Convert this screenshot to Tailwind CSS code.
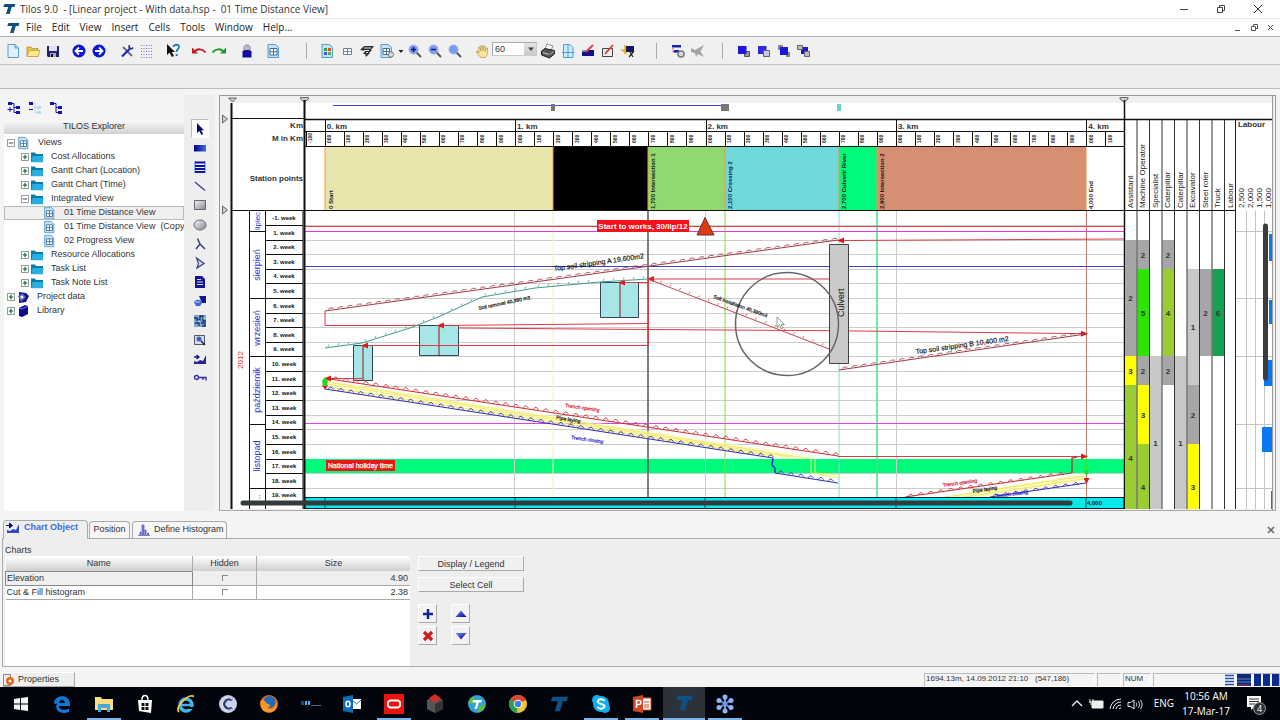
<!DOCTYPE html>
<html lang="en">
<head>
  <meta charset="UTF-8">
  <meta name="viewport" content="width=device-width, initial-scale=1.0">
  <title>Tilos 9.0 - Linear project</title>
  <script src="https://cdn.jsdelivr.net/npm/@tailwindcss/browser@4"></script>
</head>
<body class="h-screen overflow-hidden flex flex-col bg-[#f4f4f4] text-[#333] font-['Liberation_Sans',sans-serif] text-[9px]">

  <!-- Shared icons -->
  <svg class="absolute w-0 h-0">
    <defs>
      <linearGradient id="g-blue" x1="0" y1="0" x2="1" y2="1"><stop offset="0" stop-color="#7090ff"/><stop offset="1" stop-color="#000090"/></linearGradient>
      <linearGradient id="g-navy" x1="0" y1="0" x2="1" y2="0"><stop offset="0" stop-color="#000080"/><stop offset="1" stop-color="#3a70e8"/></linearGradient>
      <linearGradient id="g-grey" x1="0" y1="0" x2="1" y2="1"><stop offset="0" stop-color="#f4f4ff"/><stop offset="1" stop-color="#888"/></linearGradient>
      <symbol id="tilos" viewBox="0 0 14 12"><path d="M2.5 1h10.8l-.8 3H9.8L7.6 11H4l2.2-7H1.2z" fill="#0e4f86"/></symbol>
      <symbol id="doc" viewBox="0 0 16 16"><path d="M3 1.5h7l3.5 3.5v9.500H3z" fill="#dff1fc" stroke="#5e9cc8"/><path d="M10 1.5v3.5h3.5" fill="#9fd0ee" stroke="#5e9cc8"/></symbol>
      <symbol id="sheet" viewBox="0 0 16 16"><path d="M3 1.5h7.5l3 3v10H3z" fill="#c4e2f5" stroke="#5a9bca"/><path d="M5 5.5h7v6.5H5zM8.500 5.5V12M5 8.7h7" fill="#fff" stroke="#3f6f9c"/></symbol>
      <symbol id="folder" viewBox="0 0 14 12"><path d="M1 1.5h4l1 1.5h7v8H1z" fill="#0a7cab"/><path d="M2.5 5H13.500l-.7 6.2H1.5z" fill="#27aee0"/></symbol>
      <symbol id="plus-box" viewBox="0 0 9 9"><path d="M.5.5h8v8h-8z" fill="#fff" stroke="#7c8c7c"/><path d="M2 4.5h5M4.5 2v5" stroke="#063" stroke-width="1.3"/></symbol>
      <symbol id="minus-box" viewBox="0 0 9 9"><path d="M.5.5h8v8h-8z" fill="#fff" stroke="#888"/><path d="M2 4.5h5" stroke="#333"/></symbol>
      <symbol id="lens" viewBox="0 0 16 16"><path d="M9.5 9.5l4.5 4.5" stroke="#555" stroke-width="2"/><circle cx="6.5" cy="6.5" r="4.5" fill="#7b9bf0" stroke="#9ab0e8"/></symbol>
    </defs>
  </svg>

  <!-- Title bar -->
  <header class="h-[19px] shrink-0 flex items-center bg-white pl-0.5 border-b border-[#e8e8e8] font-['Open_Sans','Noto_Sans',sans-serif] text-[10px]">
    <svg class="w-[14px] h-3"><use href="#tilos"/></svg>
    <h1 class="ml-1 text-[#333] whitespace-pre">Tilos 9.0  - [Linear project - With data.hsp -  01 Time Distance View]</h1>
    <div class="ml-auto flex">
      <button class="w-[37px] flex justify-center" aria-label="Minimize"><svg class="w-2.5 h-2.5" viewBox="0 0 10 10"><path d="M1 5.5h8" stroke="#444"/></svg></button>
      <button class="w-[37px] flex justify-center" aria-label="Restore"><svg class="w-2.5 h-2.5" viewBox="0 0 10 10" fill="none" stroke="#444"><path d="M1.5 3.5h5v5h-5zM3.5 3V1.5h5v5H7"/></svg></button>
      <button class="w-[37px] mr-1 flex justify-center" aria-label="Close"><svg class="w-2.5 h-2.5" viewBox="0 0 10 10"><path d="M1 1l8 8M9 1L1 9" stroke="#333"/></svg></button>
    </div>
  </header>

  <!-- Menu -->
  <nav class="h-[18px] shrink-0 flex items-center bg-white pl-[6px] border-b border-[#b0b0b0] font-['Open_Sans','Noto_Sans',sans-serif] text-[10px] text-[#222]">
    <svg class="w-[14px] h-3 mr-1.5"><use href="#tilos"/></svg>
    <div class="flex gap-2.5">
      <button>File</button><button>Edit</button><button>View</button><button>Insert</button><button>Cells</button><button>Tools</button><button>Window</button><button>Help...</button>
    </div>
    <svg class="ml-auto mr-1 w-[42px] h-2.5" viewBox="0 0 42 10" fill="none" stroke="#555"><path d="M1 7.5h5M17.5 3.5h4v4h-4zM19.5 3V1.5h4v4H22M34 2l5 5M39 2l-5 5"/></svg>
  </nav>

  <!-- Toolbar -->
  <div class="h-[28px] shrink-0 flex items-center bg-[#f0f0f0] pl-[3px] border-b border-[#c4c4c4]">
    <button class="w-5 flex justify-center" aria-label="New"><svg class="w-4 h-4"><use href="#doc"/></svg></button>
    <button class="w-5 flex justify-center" aria-label="Open"><svg class="w-4 h-4" viewBox="0 0 16 16"><path d="M2 4h4l1.5 1.5H13V13H2z" fill="#e8c84c" stroke="#a88420" stroke-width=".7"/><path d="M4 7.5h11L13 13.5H2z" fill="#fbe98e" stroke="#b8942c" stroke-width=".7"/></svg></button>
    <button class="w-5 flex justify-center" aria-label="Save"><svg class="w-4 h-4" viewBox="0 0 16 16"><path d="M2 3h12v11H3l-1-1z" fill="#22226a"/><path d="M4 3h8v5H4z" fill="#e0e0f4"/><path d="M5 10h6v4H5z" fill="#aab"/><path d="M6 11h2v3H6z" fill="#114"/></svg></button>
    <button class="ml-1.5 w-5 flex justify-center" aria-label="Back"><svg class="w-4 h-4" viewBox="0 0 16 16"><circle cx="8" cy="8" r="6.5" fill="#0a14dc"/><path d="M12 8H5M8 4.5L4.5 8 8 11.5" stroke="#fff" stroke-width="1.8" fill="none"/></svg></button>
    <button class="w-5 flex justify-center" aria-label="Forward"><svg class="w-4 h-4" viewBox="0 0 16 16"><circle cx="8" cy="8" r="6.5" fill="#0a14dc"/><path d="M4 8h7M8 4.5l3.5 3.5L8 11.5" stroke="#fff" stroke-width="1.8" fill="none"/></svg></button>
    <button class="ml-2 w-5 flex justify-center" aria-label="Settings"><svg class="w-4 h-4" viewBox="0 0 16 16"><path d="M4 4l9 9" stroke="#668" stroke-width="1.8"/><path d="M10.500 6L3 13.500" stroke="#1c28b8" stroke-width="2.2"/><path d="M14 4.5c-1.500 2.500-5 1-3.500-2.500" stroke="#222a80" stroke-width="1.5" fill="none"/></svg></button>
    <button class="w-5 flex justify-center" aria-label="Grid"><svg class="w-4 h-4" viewBox="0 0 16 16"><path d="M2 2.5h12M2 5.5h12M2 8.5h12M2 11.5h12M2 14.5h12" stroke="#7070e0" stroke-dasharray="1 1.5"/></svg></button>
    <button class="ml-1.5 w-5 flex justify-center" aria-label="Context help"><svg class="w-4 h-4" viewBox="0 0 16 16"><path d="M2 1v11l2.5-2.5L7 14l2-1-2.3-4H10z" fill="#111"/><path d="M8.500 4c0-3 5.500-3 5.500 0 0 2.500-2.500 2-2.500 5" stroke="#2080b8" stroke-width="1.8" fill="none"/><path d="M10.700 11h2v2h-2z" fill="#2080b8"/></svg></button>
    <button class="ml-1.5 w-5 flex justify-center" aria-label="Undo"><svg class="w-4 h-4" viewBox="0 0 16 16"><path d="M3.500 8.500c3-3 8-3 11 1" stroke="#c41c1c" stroke-width="2" fill="none"/><path d="M1 4.500v6h6z" fill="#c41c1c"/></svg></button>
    <button class="w-5 flex justify-center" aria-label="Redo"><svg class="w-4 h-4" viewBox="0 0 16 16"><path d="M12.500 8.500c-3-3-8-3-11 1" stroke="#1d9a2c" stroke-width="2" fill="none"/><path d="M15 4.500v6H9z" fill="#1d9a2c"/></svg></button>
    <button class="ml-2 w-5 flex justify-center" aria-label="User"><svg class="w-4 h-4" viewBox="0 0 16 16"><path d="M5 8V4.500c0-3.500 6-3.500 6 0V8z" fill="#b8b8cc" stroke="#889"/><path d="M3.500 8c2-1.500 7-1.500 9 0v6.500h-9z" fill="#1010a0"/></svg></button>
    <button class="ml-1.5 w-5 flex justify-center" aria-label="Sheet"><svg class="w-4 h-4"><use href="#sheet"/></svg></button>
    <span class="ml-[23px] w-px h-4 bg-[#aaa]"></span>
    <button class="ml-2.5 w-5 flex justify-center" aria-label="Colours"><svg class="w-4 h-4" viewBox="0 0 16 16"><path d="M3 1.5h7.5l3 3v10H3z" fill="#c4e2f5" stroke="#5a9bca"/><path d="M5 5h3v3H5z" fill="#3a9c3a"/><path d="M9 5h3v3H9z" fill="#e05030"/><path d="M5 9h3v3H5z" fill="#4060d0"/><path d="M9 9h3v3H9z" fill="#5aa848"/></svg></button>
    <button class="w-5 flex justify-center" aria-label="Cells"><svg class="w-4 h-4" viewBox="0 0 16 16" fill="#fff" stroke="#777fa4"><path d="M4.5 5.5h8v6h-8zM8.500 5.5v6M4.5 8.5h8"/></svg></button>
    <button class="w-5 flex justify-center" aria-label="Filter"><svg class="w-4 h-4" viewBox="0 0 16 16"><path d="M1 7l4-4h10l-3 4h1l-3 3h1l-4 4-1-3H4l2-3z" fill="#333"/><path d="M5 5h7M5 7.500h5M7 9.500h2" stroke="#ddd"/></svg></button>
    <button class="w-5 flex justify-center" aria-label="Sheet options"><svg class="w-4 h-4" viewBox="0 0 16 16"><path d="M2 1.5h7.5l3 3v10H2z" fill="#c4e2f5" stroke="#5a9bca"/><path d="M4 5.5h6.5v6H4zM7.5 5.5v6M4 8.5h6.5" fill="#fff" stroke="#3f6f9c"/><circle cx="12" cy="11.5" r="2.6" fill="#ddd" stroke="#777"/></svg></button>
    <svg class="w-2 h-2" viewBox="0 0 8 8"><path d="M1.5 3h5L4 6z" fill="#222"/></svg>
    <button class="w-5 flex justify-center" aria-label="Zoom in"><svg class="w-4 h-4" viewBox="0 0 16 16"><use href="#lens"/><path d="M4 6.5h5M6.5 4v5" stroke="#111a70" stroke-width="1.5"/></svg></button>
    <button class="w-5 flex justify-center" aria-label="Zoom out"><svg class="w-4 h-4" viewBox="0 0 16 16"><use href="#lens"/><path d="M4 6.5h5" stroke="#111a70" stroke-width="1.5"/></svg></button>
    <button class="w-5 flex justify-center" aria-label="Zoom fit"><svg class="w-4 h-4"><use href="#lens"/></svg></button>
    <button class="ml-[7px] w-5 flex justify-center" aria-label="Pan"><svg class="w-4 h-4" viewBox="0 0 16 16"><path d="M2 8l2 .5L5 10 4.500 4H6l.7 4L7 2.500h1.500L9 8l.8-5h1.400v5.500l1-3.500h1.300c.3 5-.5 9-2.500 9.500H7C5 13.500 3.500 10.500 2 8z" fill="#fbe3a0" stroke="#b8903c" stroke-width=".7"/></svg></button>
    <select aria-label="Zoom" class="mb-1 w-[45px] h-[14px] bg-white border border-[#aaa] border-r-[#ccc] border-b-[#ccc] appearance-none text-[9px] pl-0.5 rounded-none bg-[linear-gradient(#e4e4e4,#c8c8c8)] bg-[length:12px_12px] bg-right bg-no-repeat"><option>60</option></select>
    <svg class="-ml-3 mb-1 w-3 h-3 pointer-events-none" viewBox="0 0 12 12"><path d="M3 4.5h6L6 8z" fill="#444"/></svg>
    <button class="ml-px w-5 flex justify-center" aria-label="Print"><svg class="w-4 h-4" viewBox="0 0 16 16"><path d="M5 6l2-5 6 2-2 4z" fill="#fff" stroke="#666" stroke-width=".7"/><path d="M1.5 8L5 5.5l9.500 2V11l-5 4-8-3z" fill="#555" stroke="#222"/><path d="M3 9.500l6 2" stroke="#ccc"/><path d="M10 11l4-2.500" stroke="#aaa"/></svg></button>
    <button class="w-5 flex justify-center" aria-label="Page"><svg class="w-4 h-4" viewBox="0 0 16 16"><path d="M3.500 1.5H10l3 3v10H3.500z" fill="#cfeafa" stroke="#48a0d0"/><path d="M8 2v12M2 9.500h12.500" stroke="#48a0d0"/></svg></button>
    <button class="w-5 flex justify-center" aria-label="Format"><svg class="w-4 h-4" viewBox="0 0 16 16"><path d="M2 7h12v6H2z" fill="#10108c"/><path d="M2 7h5L5 9H2z" fill="#88a"/><path d="M6 9l7-7" stroke="#e04048" stroke-width="2"/></svg></button>
    <button class="w-5 flex justify-center" aria-label="Edit cell"><svg class="w-4 h-4" viewBox="0 0 16 16"><path d="M2.5 5.5h10v8h-10z" fill="#eee" stroke="#444"/><path d="M5 11l8-9" stroke="#d83840" stroke-width="1.8"/></svg></button>
    <button class="w-5 flex justify-center" aria-label="Wizard"><svg class="w-4 h-4" viewBox="0 0 16 16"><path d="M6 3h8v6H6z" fill="#181860"/><path d="M1 7h5M5 2v9M3 8l4 2" stroke="#dcb020" stroke-width="1.5"/><path d="M9 14l5-6M10 9l3 5" stroke="#222" stroke-width="1.2"/></svg></button>
    <span class="ml-[18px] w-px h-4 bg-[#aaa]"></span>
    <button class="ml-[11px] w-5 flex justify-center" aria-label="Task settings"><svg class="w-4 h-4" viewBox="0 0 16 16"><path d="M2 2h9v2.500H2z" fill="#1424b4"/><path d="M3 5v4M3 9h4" stroke="#d84040" stroke-dasharray="1.5 1"/><path d="M4 7h5v2.500H4z" fill="#1424b4"/><circle cx="11" cy="11" r="3" fill="#ddd" stroke="#777" stroke-width="1.5"/></svg></button>
    <button class="w-5 flex justify-center" aria-label="Announce"><svg class="w-4 h-4" viewBox="0 0 16 16"><path d="M1 5l4 2 9-5-3.500 6.500L14 14l-6-3-2 3-1-4-4-1z" fill="#a4a4a4"/></svg></button>
    <span class="ml-[14px] w-px h-4 bg-[#aaa]"></span>
    <button class="ml-[11px] w-5 flex justify-center" aria-label="To front"><svg class="w-4 h-4" viewBox="0 0 16 16"><path d="M8.500 8.500h5v5h-5z" fill="#999" stroke="#555"/><path d="M2 3h8.500v8H2z" fill="#1818e0"/></svg></button>
    <button class="w-5 flex justify-center" aria-label="To back"><svg class="w-4 h-4" viewBox="0 0 16 16"><path d="M2 3h8.500v8H2z" fill="#2a2ae0"/><path d="M7.500 7.500h6v6h-6z" fill="#c8c8dc" stroke="#666"/></svg></button>
    <button class="w-5 flex justify-center" aria-label="Forward one"><svg class="w-4 h-4" viewBox="0 0 16 16"><path d="M2 2h5v5H2zM10 9h4v5h-4z" fill="#888"/><path d="M4 4h8v8H4z" fill="#1818d8"/></svg></button>
    <button class="w-5 flex justify-center" aria-label="Back one"><svg class="w-4 h-4" viewBox="0 0 16 16"><path d="M5 4h7v7H5z" fill="#1818d8"/><path d="M1.500 2.500h5v4h-5zM8.500 8.500h5v5h-5z" fill="#bbb" stroke="#666"/></svg></button>
  </div>
  <div class="h-6 shrink-0 bg-[#eee] border-b border-[#bbb]"></div>

  <!-- Work area -->
  <main class="flex-1 min-h-0 flex pt-1.5 pb-0.5 pr-1 bg-[#f4f4f4]">
    <aside class="w-[184px] shrink-0 pl-1 flex flex-col">
      <div class="h-[25px] flex items-center pl-[3px] gap-[7px] bg-[#f4f4f4]">
        <button aria-label="Expand all"><svg class="w-3.5 h-3.5" viewBox="0 0 14 14" fill="#1010b4"><path d="M1 1h4v3H1zM9 5h4v3H9zM9 10h4v3H9z"/><path d="M5 2.500h2v9h2M7 6.500h2M.5 8.500h5M3 6v5" stroke="#1010b4" fill="none"/></svg></button>
        <button aria-label="Collapse all"><svg class="w-3.5 h-3.5" viewBox="0 0 14 14" fill="#b8dcf0"><path d="M1 1h4v3H1z" fill="#1010b4"/><path d="M9 5h4v3H9zM9 10h4v3H9z"/><path d="M5 2.500h2v9h2M7 6.500h2" stroke="#b8dcf0" fill="none"/><path d="M1 8.500h4" stroke="#1010b4"/></svg></button>
        <button aria-label="Show tree"><svg class="w-3.5 h-3.5" viewBox="0 0 14 14" fill="#1010b4"><path d="M1 1h4v3H1zM9 5h4v3H9zM9 10h4v3H9z"/><path d="M5 2.500h2v9h2M7 6.500h2" stroke="#1010b4" fill="none"/></svg></button>
      </div>
      <h2 class="h-[14px] flex items-center justify-center bg-linear-to-b from-[#fafafa] to-[#d2d2d2] text-[9px]">TILOS Explorer</h2>
      <ul class="flex-1 bg-white pt-0.5 text-[9px]">
        <li class="h-[14px] flex items-center pl-[3px]"><svg class="w-2 h-2"><use href="#minus-box"/></svg><svg class="w-3.5 h-3.5 ml-px"><use href="#sheet"/></svg><span class="ml-2">Views</span></li>
        <li class="h-[14px] flex items-center pl-[17px]"><svg class="w-2 h-2"><use href="#plus-box"/></svg><svg class="w-3.5 h-3 ml-px"><use href="#folder"/></svg><span class="ml-[7px]">Cost Allocations</span></li>
        <li class="h-[14px] flex items-center pl-[17px]"><svg class="w-2 h-2"><use href="#plus-box"/></svg><svg class="w-3.5 h-3 ml-px"><use href="#folder"/></svg><span class="ml-[7px]">Gantt Chart (Location)</span></li>
        <li class="h-[14px] flex items-center pl-[17px]"><svg class="w-2 h-2"><use href="#plus-box"/></svg><svg class="w-3.5 h-3 ml-px"><use href="#folder"/></svg><span class="ml-[7px]">Gantt Chart (Time)</span></li>
        <li class="h-[14px] flex items-center pl-[17px]"><svg class="w-2 h-2"><use href="#minus-box"/></svg><svg class="w-3.5 h-3 ml-px"><use href="#folder"/></svg><span class="ml-[7px]">Integrated View</span></li>
        <li class="h-[14px] flex items-center pl-[38px] bg-[#efefef] outline outline-[#bbb] -outline-offset-1"><svg class="w-3.5 h-3.5"><use href="#sheet"/></svg><span class="ml-2">01 Time Distance View</span></li>
        <li class="h-[14px] flex items-center pl-[38px]"><svg class="w-3.5 h-3.5 shrink-0"><use href="#sheet"/></svg><span class="ml-2 whitespace-pre overflow-hidden">01 Time Distance View  (Copy</span></li>
        <li class="h-[14px] flex items-center pl-[38px]"><svg class="w-3.5 h-3.5"><use href="#sheet"/></svg><span class="ml-2">02 Progress View</span></li>
        <li class="h-[14px] flex items-center pl-[17px]"><svg class="w-2 h-2"><use href="#plus-box"/></svg><svg class="w-3.5 h-3 ml-px"><use href="#folder"/></svg><span class="ml-[7px]">Resource Allocations</span></li>
        <li class="h-[14px] flex items-center pl-[17px]"><svg class="w-2 h-2"><use href="#plus-box"/></svg><svg class="w-3.5 h-3 ml-px"><use href="#folder"/></svg><span class="ml-[7px]">Task List</span></li>
        <li class="h-[14px] flex items-center pl-[17px]"><svg class="w-2 h-2"><use href="#plus-box"/></svg><svg class="w-3.5 h-3 ml-px"><use href="#folder"/></svg><span class="ml-[7px]">Task Note List</span></li>
        <li class="h-[14px] flex items-center pl-[3px]"><svg class="w-2 h-2"><use href="#plus-box"/></svg><svg class="w-3.5 h-3.5 ml-px" viewBox="0 0 14 14"><path d="M3 2l7 1 3 3-3 6-7 1z" fill="#14147c"/><path d="M2 6l4-3 4 4-5 5z" fill="#4c60d8"/><circle cx="6" cy="7" r="1.5" fill="#fff"/></svg><span class="ml-[7px]">Project data</span></li>
        <li class="h-[14px] flex items-center pl-[3px]"><svg class="w-2 h-2"><use href="#plus-box"/></svg><svg class="w-3.5 h-3.5 ml-px" viewBox="0 0 14 14"><path d="M3 4l6-3 3 1v8l-6 3-3-1z" fill="#0c0c90"/><path d="M3 4l3 1 6-3" stroke="#6a7ae8" fill="none"/></svg><span class="ml-[7px]">Library</span></li>
      </ul>
    </aside>

    <div class="w-[31px] shrink-0 pt-6 bg-[#eee]">
      <div class="h-[269px] flex flex-col items-center justify-between">
        <button class="w-[18px] h-[19px] flex items-center justify-center bg-white border border-[#bbb] border-r-white border-b-white" aria-label="Select"><svg class="w-3.5 h-3.5" viewBox="0 0 14 14"><path d="M4 1v10l2.300-2L8.500 13l1.700-1-2-3.700H11z" fill="#0a0a70"/></svg></button>
        <button class="w-[18px] h-[19px] flex items-center justify-center" aria-label="Bar"><svg class="w-3.5 h-3.5" viewBox="0 0 14 14"><path d="M1 4h12v6.500H1z" fill="url(#g-navy)"/></svg></button>
        <button class="w-[18px] h-[19px] flex items-center justify-center" aria-label="Bars"><svg class="w-3.5 h-3.5" viewBox="0 0 14 14"><path d="M1 1h2v12H1zM11 1h2v12h-2z" fill="#8fb4ee"/><path d="M2 2.500h10M2 6h10M2 9h10M2 12h10" stroke="#1212a0" stroke-width="1.8"/></svg></button>
        <button class="w-[18px] h-[19px] flex items-center justify-center" aria-label="Line"><svg class="w-3.5 h-3.5" viewBox="0 0 14 14"><path d="M2 3l10 8.500" stroke="#3434b0" stroke-width="1.2"/></svg></button>
        <button class="w-[18px] h-[19px] flex items-center justify-center" aria-label="Rectangle"><svg class="w-3.5 h-3.5" viewBox="0 0 14 14"><path d="M1.500 2.500h11v9h-11z" fill="url(#g-grey)" stroke="#667"/></svg></button>
        <button class="w-[18px] h-[19px] flex items-center justify-center" aria-label="Ellipse"><svg class="w-3.5 h-3.5" viewBox="0 0 14 14"><ellipse cx="7" cy="7" rx="6" ry="5" fill="url(#g-grey)" stroke="#667"/></svg></button>
        <button class="w-[18px] h-[19px] flex items-center justify-center" aria-label="Polyline"><svg class="w-3.5 h-3.5" viewBox="0 0 14 14"><path d="M3 12l4-5 5 5M7 7L4.500 1.500" stroke="#333c78" stroke-width="1.5" fill="none"/></svg></button>
        <button class="w-[18px] h-[19px] flex items-center justify-center" aria-label="Polygon"><svg class="w-3.5 h-3.5" viewBox="0 0 14 14"><path d="M3.500 2l7.500 5.500-7 4.500 1.500-4.500z" fill="#d8dcec" stroke="#333c78" stroke-width="1.2"/></svg></button>
        <button class="w-[18px] h-[19px] flex items-center justify-center" aria-label="Note"><svg class="w-3.5 h-3.5" viewBox="0 0 14 14"><path d="M2 1h7l3 3v9H2z" fill="#14148c"/><path d="M4 4.500h4M4 7h6M4 9.500h6" stroke="#cfd6ff"/></svg></button>
        <button class="w-[18px] h-[19px] flex items-center justify-center" aria-label="Shape"><svg class="w-3.5 h-3.5" viewBox="0 0 14 14"><path d="M6 2h7v7H9z" fill="#14148c"/><path d="M1 8c2-3 7-3 8 1l-2 3H3z" fill="#3f63d8"/><path d="M2 8h5" stroke="#cde"/></svg></button>
        <button class="w-[18px] h-[19px] flex items-center justify-center" aria-label="Map"><svg class="w-3.5 h-3.5" viewBox="0 0 14 14"><path d="M1 1h12v12H1z" fill="#7ca8cc"/><path d="M1 4h3v2h3V2h3v5h3M2 9h4v3M8 9h4v3H9" stroke="#16306c" stroke-width="1.3" fill="none"/><path d="M5 7h2M10 4h2" stroke="#d4eaf0"/></svg></button>
        <button class="w-[18px] h-[19px] flex items-center justify-center" aria-label="Picture"><svg class="w-3.5 h-3.5" viewBox="0 0 14 14"><path d="M1.500 2.500h10v9h-10z" fill="#cfdcf4" stroke="#556"/><circle cx="6" cy="6" r="2.5" fill="#4060b8"/><path d="M8 8l4 4" stroke="#222" stroke-width="1.5"/></svg></button>
        <button class="w-[18px] h-[19px] flex items-center justify-center" aria-label="Histogram"><svg class="w-3.5 h-3.5" viewBox="0 0 14 14"><path d="M1 12V9l3 1 3-2 3 1 3-6v9z" fill="#23239c"/><path d="M1 5h4M3.500 3L6 5 3.500 7" stroke="#111a80" stroke-width="1.3" fill="none"/></svg></button>
        <button class="w-[18px] h-[19px] flex items-center justify-center" aria-label="Key"><svg class="w-3.5 h-3.5" viewBox="0 0 14 14"><circle cx="3.500" cy="6.500" r="2" fill="none" stroke="#2a2aa8" stroke-width="1.3"/><path d="M5.500 6.500H13v3M10 6.500V9" stroke="#2a2aa8" stroke-width="1.3" fill="none"/></svg></button>
      </div>
    </div>

    <!-- Time distance chart -->
    <section class="ml-1 flex-1 min-w-0 border border-[#999] border-b-[#aaa] bg-[#f0f0f0]">
      <svg id="chart" class="block w-full h-full font-['Liberation_Sans',sans-serif]" viewBox="220 96 1055 414" preserveAspectRatio="xMinYMin meet">
        <path d="M232 103H1272V509H232z" fill="#fff"/>

        <!-- split handles -->
        <g fill="#ccc" stroke="#666"><path d="M228.500 98h8l-4 4zM300.500 97.500h8v1.500l-4 3-4-3zM1120 97.500h8v1.500l-4 3-4-3zM222.500 115v8l5-4zM222.500 206v8l5-4z"/></g>

        <!-- overview -->
        <path d="M333 105.500H724" stroke="#4444e0"/>
        <path d="M551 104h4v7h-4zM721 104h8v7h-8z" fill="#777"/>
        <path d="M837 104h4v7h-4z" fill="#66d4cc"/>

        <!-- station zones -->
        <g>
          <path d="M325 147h228v63H325z" fill="#e8e6ac"/>
          <path d="M553 147h95v63h-95z" fill="#000"/>
          <path d="M648 147h77v63h-77z" fill="#90d870"/>
          <path d="M725 147h114v63H725z" fill="#6fd8da"/>
          <path d="M839 147h38v63h-38z" fill="#00fa7c"/>
          <path d="M877 147h209v63H877z" fill="#d68f72"/>
          <path d="M325 147v63M553 147v63M648 147v63M725 147v63M839 147v63M877 147v63M1086 147v63" stroke="#f09838"/>
        </g>

        <g id="weeks"></g>

        <!-- holiday band -->
        <path d="M305 459h819v14H305z" fill="#00fa7c"/>

        <!-- station lines -->
        <path d="M514.500 210V497M705.500 210V497M896.500 210V497" stroke="#ccc"/>
        <path d="M553 210V497" stroke="#eef2c0"/>
        <path d="M648 210V497" stroke="#555" stroke-width="1.5"/>
        <path d="M725 210V497" stroke="#84d84c"/>
        <path d="M839 210V497" stroke="#7adfd0"/>
        <path d="M877 210V497" stroke="#40e090" stroke-width="1.5"/>
        <path d="M1086.500 210V497" stroke="#c87868"/>
        <path d="M305 226.500H1124" stroke="#f04040"/>
        <path d="M305 231.500H1124" stroke="#f030f0"/>
        <path d="M305 266.500H1124" stroke="#4040c0"/>
        <path d="M305 423.500H1124" stroke="#e040e8"/>

        <!-- cut boxes -->
        <g fill="#a6e6e6" stroke="#345">
          <path d="M600.500 282.500h38v35h-38zM419.500 325.500h39v30h-39zM353.500 345.500h19v35h-19z"/>
        </g>
        <path d="M620 282v35M439 325v30M363 345v35" stroke="#a04050" stroke-width="1.3"/>

        <!-- red connections -->
        <g fill="none" stroke="#dc3c44">
          <path d="M325 311V325.500H420M440 325.500L648 323.500M458 328L648 329.500L830 330.700L1086 333.700M366 345.500H648M330 378.500H363M648 279H829M622 282.500H648M648.500 279V346M841 240.500L1124 239M838 456.500H1082"/>
        </g>
        <g fill="#e01818">
          <path d="M324 378.500l7-3v6zM437 325.500l7-3v6zM361 345.500l7-3v6zM618 282.500l7-3v6zM647 279l7-3v6zM837 240.500l7-3v6zM1088 333.700l-7-3v6zM1088 456.500l-7-3v6z"/>
          <path d="M325 390l-3-5h6zM1086.500 484l-3-6h6z"/>
        </g>
        <path d="M325 377l3 4-1 5h-4l-1-5zM1086.500 476l-3-5h6z" fill="#20d820"/>
        <path d="M1086.500 458V472" stroke="#30e030"/>

        <!-- pipe works -->
        <g>
          <path d="M330 381L811 456V459H775L330 389z" fill="#fbf8c4" fill-opacity=".6"/>
          <path d="M328 382L811 459V473L838 478M328 384L790 457M328 387L772 456M815 459V473L838 475" fill="none" stroke="#f2ec60"/>
          <path d="M1084 474L940 497H985L1084 480z" fill="#fbf8a8" fill-opacity=".7"/>
          <path d="M1084 476L945 497M1084 479L965 497" stroke="#f0e860"/>
        </g>

        <g id="tasks"></g>

        <!-- culvert -->
        <path d="M829.500 244.500h19v119h-19z" fill="#cacaca" stroke="#444"/>
        <text transform="translate(844 317) rotate(-90)" class="text-[9px]" fill="#111">Culvert</text>
        <circle cx="787" cy="324" r="51.5" fill="none" stroke="#666" stroke-width="1.5"/>
        <path d="M777 317v10l2.500-2 2 4 1.500-1-2-3.500h3.500z" fill="#fff" stroke="#777" stroke-width=".8"/>

        <!-- milestone and labels -->
        <path d="M705 217.500L714 235H697z" fill="#dc3a10" stroke="#633"/>
        <path d="M597 220h92v12h-92z" fill="#f81018"/>
        <text x="643" y="229" text-anchor="middle" class="text-[8px] font-bold" fill="#fff">Start to works, 30/lip/12</text>
        <path d="M326 460h69v11h-69z" fill="#e81818"/>
        <text x="328" y="468" class="text-[7px]" fill="#fff" stroke="#fff" stroke-width=".25">National holiday time</text>

        <g class="text-[7px]" fill="#111" stroke="#111" stroke-width=".15">
          <text transform="translate(554 271) rotate(-8)">Top soil stripping A 19,600m2</text>
          <text transform="translate(916 354) rotate(-8)">Top soil stripping B 10,400 m2</text>
        </g>
        <g class="text-[5px]" fill="#111" stroke="#111" stroke-width=".2">
          <text transform="translate(479 310) rotate(-12)">Soil removal 40,380 m3</text>
          <text transform="translate(713 298) rotate(20)">Soil installation 40,380m3</text>
          <text transform="translate(556 419) rotate(9)">Pipe laying</text>
          <text transform="translate(973 493) rotate(-9)">Pipe laying</text>
        </g>
        <g class="text-[5px]" fill="#d02028" stroke="#d02028" stroke-width=".2">
          <text transform="translate(565 407) rotate(8)">Trench opening</text>
          <text transform="translate(943 487) rotate(-8)">Trench opening</text>
        </g>
        <g class="text-[5px]" fill="#2020c8" stroke="#2020c8" stroke-width=".2">
          <text transform="translate(571 439) rotate(8)">Trench closing</text>
          <text transform="translate(996 498) rotate(-8)">Trench closing</text>
        </g>

        <!-- bottom profile -->
        <path d="M305 497.500h819v11H305z" fill="#08e8ea" stroke="#123"/>
        <path d="M325 497v12M515 497v12M705 497v12M896 497v12M1086 497v12" stroke="#145"/>
        <text x="1087" y="505" class="text-[6px] font-bold" fill="#123">4,000</text>

        <!-- header rules -->
        <g stroke="#111" fill="none">
          <path d="M231 118.500H305M305 131.500H1124M305 146.500H1124M231 210.500H1236"/>
          <path d="M305 119.500H1272" stroke-width="1.5"/>
          <path d="M231.500 103V509M304.500 100V509" stroke-width="2"/>
          <path d="M1124.500 100V509" stroke-width="1.5"/>
          <path d="M249.500 210V509M265.500 210V509M303 210V509M249 231.500H265M249 298.500H265M249 356.500H265M249 424.500H265M249 488.500H265"/>
        </g>
        <g class="text-[8px] font-bold" fill="#333">
          <text x="303" y="128" text-anchor="end">Km</text>
          <text x="303" y="141" text-anchor="end">M in Km</text>
          <text x="303" y="181" text-anchor="end">Station points</text>
          <text x="1238" y="127">Labour</text>
        </g>
        <g id="ruler"></g>
        <g class="text-[9px]" fill="#3030d0" text-anchor="middle">
          <text transform="translate(260 265) rotate(-90)">sierpień</text>
          <text transform="translate(260 328) rotate(-90)">wrzesień</text>
          <text transform="translate(260 390) rotate(-90)">październik</text>
          <text transform="translate(260 456) rotate(-90)">listopad</text>
          <text transform="translate(260 221) rotate(-90)" class="text-[8px]">lipiec</text>
          <text transform="translate(260 497) rotate(-90)">..</text>
          <text transform="translate(243 360) rotate(-90)" class="text-[8px]" fill="#e02828">2012</text>
        </g>

        <g id="resources"></g>

        <!-- histogram -->
        <path d="M1246.500 211V509M1255.500 211V509M1264.500 211V509M1236 231.500H1272M1236 298.500H1272M1236 356.500H1272M1236 424.500H1272M1236 488.500H1272" stroke="#c4c4c4"/>
        <path d="M1269 234h3v27h-3zM1269 300h3v24h-3zM1264 360h8v26h-8zM1262 427h10v25h-10zM1271 491h1v18h-1z" fill="#0a78f0"/>
        <path d="M1235.500 120V509" stroke="#222"/>
        <path d="M1265.500 226V378" stroke="#3c3c3c" stroke-width="5" stroke-linecap="round"/>
        <path d="M243 503H1070" stroke="#333b3d" stroke-width="5" stroke-linecap="round"/>
        <path d="M1272.500 96V510" stroke="#999"/>
      </svg>
    </section>
  </main>

  <!-- Object properties -->
  <section class="shrink-0 h-[154px] flex flex-col bg-[#f4f4f4] pt-[7px]">
    <div class="h-[18px] flex items-end pl-[3px] relative">
      <button class="h-[19px] w-[85px] shrink-0 -mb-px pb-1 flex items-center pl-0.5 gap-1 bg-[#eee] border border-b-0 border-[#aaa] rounded-t font-bold text-[#3a6ce0] whitespace-nowrap"><svg class="w-3.5 h-3" viewBox="0 0 14 12"><path d="M1 11V8l3 1 3-2 3 1 3-6v9z" fill="#3048c0"/><path d="M0 3.500h4M3.500 1L6.500 3.500 3.500 6z" fill="#0a0a80" stroke="#0a0a80"/></svg>Chart Object</button>
      <button class="h-[17px] w-[41px] ml-px bg-[#f6f6f6] border border-b-0 border-[#aaa] rounded-t">Position</button>
      <button class="h-[17px] w-[95px] ml-0.5 flex items-center pl-[5px] gap-1 bg-[#f6f6f6] border border-b-0 border-[#aaa] rounded-t whitespace-nowrap"><svg class="w-3 h-3" viewBox="0 0 12 12"><path d="M0 11.500h12M2 11V8h1v3M4 11V1h2v10M7 11V6h1v5M9.500 11V9h1v2" fill="#7a7ad8" stroke="#5a5ac0" stroke-width=".8"/></svg>Define Histogram</button>
      <button class="ml-auto mr-[5px] mb-1 w-2 h-2" aria-label="Close panel"><svg viewBox="0 0 8 8" class="block"><path d="M1 1l6 6M7 1L1 7" stroke="#666" stroke-width="1.5"/></svg></button>
    </div>
    <div class="flex-1 flex bg-[#eee] border-y border-l border-[#aaa] ml-0.5 pt-1.5">
      <div class="w-[407px] flex flex-col">
        <h3 class="h-[11px] leading-[11px] pl-0.5">Charts</h3>
        <div class="flex-1 ml-0.5 bg-white">
        <table class="w-full table-fixed border-collapse">
          <thead>
            <tr class="h-[15px] bg-linear-to-b from-white to-[#cfcfcf]">
              <th class="w-[187px] p-0 font-normal border-r border-[#aaa]">Name</th>
              <th class="w-[64px] p-0 font-normal border-r border-[#aaa]">Hidden</th>
              <th class="p-0 font-normal">Size</th>
            </tr>
          </thead>
          <tbody>
            <tr class="h-[14px] bg-[#efefef] border-b border-[#aaa]">
              <td class="p-0 pl-px border border-[#888] leading-3">Elevation</td>
              <td class="p-0 border-r border-[#aaa]"><input type="checkbox" aria-label="Hide Elevation" class="block mx-auto w-1.5 h-1.5 appearance-none border-t border-l border-[#888]"></td>
              <td class="p-0 pr-0.5 text-right leading-3">4.90</td>
            </tr>
            <tr class="h-[14px] border-b border-[#aaa]">
              <td class="p-0 pl-px border-r border-[#aaa] leading-3">Cut &amp; Fill histogram</td>
              <td class="p-0 border-r border-[#aaa]"><input type="checkbox" aria-label="Hide Cut &amp; Fill histogram" class="block mx-auto w-1.5 h-1.5 appearance-none border-t border-l border-[#888]"></td>
              <td class="p-0 pr-0.5 text-right leading-3">2.38</td>
            </tr>
          </tbody>
        </table>
        </div>
      </div>
      <div class="ml-2 pt-[11px]">
        <button class="block w-[106px] h-[15px] bg-[#f0f0f0] border border-white border-r-[#aaa] border-b-[#aaa] leading-3">Display / Legend</button>
        <button class="block mt-1.5 w-[106px] h-[15px] bg-[#f0f0f0] border border-white border-r-[#aaa] border-b-[#aaa] leading-3">Select Cell</button>
        <div class="mt-3 grid grid-cols-[19px_19px] gap-x-[14px] gap-y-[3px]">
          <button class="h-[19px] flex items-center justify-center bg-[#f2f2f2] border border-white border-r-[#aaa] border-b-[#aaa]" aria-label="Add"><svg class="w-3 h-3" viewBox="0 0 12 12"><path d="M6 1v10M1 6h10" stroke="#10209a" stroke-width="2.5"/></svg></button>
          <button class="h-[19px] flex items-center justify-center bg-[#f2f2f2] border border-white border-r-[#aaa] border-b-[#aaa]" aria-label="Move up"><svg class="w-3 h-3" viewBox="0 0 12 12"><path d="M6 2.500L11.500 9H.5z" fill="url(#g-blue)"/></svg></button>
          <button class="h-[19px] flex items-center justify-center bg-[#f2f2f2] border border-white border-r-[#aaa] border-b-[#aaa]" aria-label="Delete"><svg class="w-3 h-3" viewBox="0 0 12 12"><path d="M2 2l8 8M10 2l-8 8" stroke="#cc1c1c" stroke-width="3.2"/></svg></button>
          <button class="h-[19px] flex items-center justify-center bg-[#f2f2f2] border border-white border-r-[#aaa] border-b-[#aaa]" aria-label="Move down"><svg class="w-3 h-3" viewBox="0 0 12 12"><path d="M6 9.500L.5 3h11z" fill="url(#g-blue)"/></svg></button>
        </div>
      </div>
    </div>
  </section>

  <!-- Status bar -->
  <footer class="h-5 shrink-0 flex items-end justify-between bg-[#f4f4f4] text-[8px]">
    <button class="ml-0.5 w-[73px] h-[15px] flex items-center gap-[3px] border border-white border-r-[#aaa] border-b-[#aaa] bg-[#eee] text-[9px]"><svg class="w-3 h-3" viewBox="0 0 12 12"><path d="M.5.5h7v11h-7z" fill="#eee" stroke="#888"/><circle cx="7" cy="7" r="4" fill="#e0681c"/><circle cx="7" cy="7" r="1.5" fill="#fff"/></svg>Properties</button>
    <div class="flex gap-0.5 h-[14px]">
      <span class="w-[171px] border border-[#bbb] border-r-white border-b-white pl-px leading-[10px] whitespace-pre">1694.13m, 14.09.2012 21:10   (547,186)</span>
      <span class="w-[24px] border border-[#bbb] border-r-white border-b-white"></span>
      <span class="w-[28px] border border-[#bbb] border-r-white border-b-white pl-px leading-[10px]">NUM</span>
      <span class="w-[127px] border border-[#bbb] border-b-white flex justify-end">
        <svg class="w-14 h-3" viewBox="0 0 56 12"><path d="M2 1.500h9M2 4.500h9M2 7.500h9M2 10.500h9" stroke="#2c4cb0" stroke-width="1.5"/><path d="M14 0h14v12H14z" fill="#0c2a78"/><path d="M14 5h14M14 8h14" stroke="#5c84c0"/><path d="M15 11h12" stroke="#c03048"/><path d="M31 0h7v12h-7zM40 0h7v12h-7zM49 0h7v12h-7z" fill="#0a2a90"/></svg>
      </span>
    </div>
  </footer>

  <!-- Taskbar -->
  <div class="h-[33px] shrink-0 flex justify-between bg-[#02040c] text-white font-['Open_Sans','Noto_Sans',sans-serif]">
    <div class="w-[746px] grid grid-cols-18 [&>button]:flex [&>button]:items-center [&>button]:justify-center [&_svg]:w-5 [&_svg]:h-5">
      <button aria-label="Start"><svg viewBox="0 0 20 20"><path d="M3 5l6-1v5.500H3zM10 4l7-1v6.500h-7zM3 10.500h6V16l-6-1zM10 10.500h7V17l-7-1z" fill="#f4f4f4"/></svg></button>
      <button aria-label="Edge"><svg viewBox="0 0 20 20"><path d="M2 9C3 0 18 0 18 10v2H7c0 4 6 5 10 2.500V18C8 21 2 16 5 9.500c-1 .5-2 1-3-.5zm5 0h6c0-4-6-4-6 0z" fill="#1078d4"/></svg></button>
      <button aria-label="File Explorer" class="bg-[linear-gradient(#7cb4ea,#7cb4ea)] bg-[length:34px_2px] bg-bottom bg-no-repeat"><svg viewBox="0 0 20 20"><path d="M1 3h6l1 2h11v11H1z" fill="#f6dd84"/><path d="M4 10h12v8h-3v-4H7v4H4z" fill="#48a8dc"/></svg></button>
      <button aria-label="Store"><svg viewBox="0 0 20 20"><path d="M3 6h14l-1 13-12-2z" fill="#fff"/><path d="M7 6c0-6 6-6 6 0" stroke="#fff" stroke-width="1.5" fill="none"/><path d="M6.500 9h3v3h-3zM10.500 9h3v3h-3zM6.500 13h3v3h-3zM10.500 13h3v3h-3z" fill="#111"/></svg></button>
      <button aria-label="Internet Explorer"><svg viewBox="0 0 20 20"><circle cx="10" cy="11" r="6" fill="none" stroke="#42b4ec" stroke-width="3.5"/><path d="M5 11h11" stroke="#42b4ec" stroke-width="2.5"/><path d="M12 13h6v2h-5z" fill="#02040c"/><path d="M3 18C-2 14 12-1 18 2.500" stroke="#ecc440" stroke-width="1.8" fill="none"/></svg></button>
      <button aria-label="Cleaner"><svg viewBox="0 0 20 20"><circle cx="10" cy="10" r="9" fill="#c8d4ee"/><path d="M14 6a5 5 0 1 0 0 8" stroke="#283c74" stroke-width="3" fill="none"/><path d="M14 5a6 6 0 1 0 0 10" stroke="#fff" stroke-width="1" fill="none"/></svg></button>
      <button aria-label="Firefox"><svg viewBox="0 0 20 20"><circle cx="10" cy="10" r="9" fill="#e4701c"/><circle cx="10.500" cy="8" r="6" fill="#2468b0"/><path d="M2 6c4-1 4 3 7 4 2 0 3 3-1 4 4 3 9-1 9-6 2 6-2 11-8 10C3 18 1 12 2 6z" fill="#f49a2c"/></svg></button>
      <button aria-label="Meter"><svg viewBox="0 0 20 20"><path d="M0 7h3v4H0z" fill="#1c4c74"/><path d="M4 7h2v4H4zM7 7h2v4H7z" fill="#4ab0e8"/><path d="M10 11.500h10" stroke="#567"/></svg></button>
      <button aria-label="Outlook"><svg viewBox="0 0 20 20"><path d="M9 5h10v10H9z" fill="#fff"/><path d="M10 6l4.500 4L19 6" stroke="#1070c0" fill="none"/><path d="M1 3l10-2v18L1 17z" fill="#0f6cbd"/><ellipse cx="6" cy="10" rx="2" ry="2.8" fill="none" stroke="#fff" stroke-width="1.5"/></svg></button>
      <button aria-label="Recorder" class="bg-[linear-gradient(#7cb4ea,#7cb4ea)] bg-[length:34px_2px] bg-bottom bg-no-repeat"><svg viewBox="0 0 20 20"><path d="M0 0h20v20H0z" fill="#e81410"/><path d="M6 6.500h8l2 1.500v4l-2 1.500H6L4 12V8z" fill="none" stroke="#fff" stroke-width="1.8"/></svg></button>
      <button aria-label="Cube"><svg viewBox="0 0 20 20"><path d="M2 6l8-4 8 4v9l-8 4-8-4z" fill="#555"/><path d="M10 10l8-4v9l-8 4z" fill="#333"/><path d="M10 0l6 4-6 5-6-5z" fill="#d42c2c"/></svg></button>
      <button aria-label="Tilos Globe"><svg viewBox="0 0 20 20"><circle cx="10" cy="10" r="9" fill="#30a0d8"/><path d="M3 5c4-4 6 0 4 3s-4 1-5 3c-1-2 0-4 1-6zM12 12l6-2c0 5-3 8-7 8z" fill="#5cbc44"/><path d="M6 6h9l-.6 2.500h-2.600L10 15H7.500l1.800-6.500H5.500z" fill="#fff"/></svg></button>
      <button aria-label="Chrome"><svg viewBox="0 0 20 20"><circle cx="10" cy="10" r="9" fill="#f0c42c"/><path d="M10 10L2.200 5.500A9 9 0 0 1 17.800 5.500L18 6z" fill="#dc4434"/><path d="M10 10L2.200 5.500A9 9 0 0 0 9 19z" fill="#2ca050"/><circle cx="10" cy="10" r="4.3" fill="#fff"/><circle cx="10" cy="10" r="3.3" fill="#3c80e8"/></svg></button>
      <button aria-label="Tilos"><svg viewBox="0 0 14 12"><use href="#tilos"/></svg></button>
      <button aria-label="Skype" class="bg-[linear-gradient(#7cb4ea,#7cb4ea)] bg-[length:34px_2px] bg-bottom bg-no-repeat"><svg viewBox="0 0 20 20"><circle cx="10" cy="10" r="8" fill="#10aef0"/><circle cx="6" cy="6" r="5" fill="#10aef0"/><circle cx="14" cy="14" r="5" fill="#10aef0"/><path d="M13.500 7C12 4 6 5 7 8s6 1.500 6.500 4-5 4-7 1" stroke="#fff" stroke-width="2" fill="none"/></svg></button>
      <button aria-label="PowerPoint" class="bg-[linear-gradient(#7cb4ea,#7cb4ea)] bg-[length:34px_2px] bg-bottom bg-no-repeat"><svg viewBox="0 0 20 20"><path d="M9 4h10v12H9z" fill="#fff" stroke="#d04424"/><path d="M12 8h5M12 11h5M12 13h5" stroke="#d04424"/><path d="M1 3l10-2v18L1 17z" fill="#d04424"/><path d="M4.500 14V6.500H7c2.500 0 2.500 4 0 4H5" stroke="#fff" stroke-width="1.5" fill="none"/></svg></button>
      <button aria-label="Tilos 9" class="bg-[#2c323a] border-b-2 border-[#7cb4ea]"><svg viewBox="0 0 14 12"><use href="#tilos"/></svg></button>
      <button aria-label="Meeting" class="bg-[linear-gradient(#7cb4ea,#7cb4ea)] bg-[length:34px_2px] bg-bottom bg-no-repeat"><svg viewBox="0 0 20 20"><path d="M10 3v14M4 6l12 8M16 6L4 14" stroke="#6c9cec" stroke-width="2"/><g fill="#88b4fa"><circle cx="10" cy="3" r="2.5"/><circle cx="10" cy="17" r="2.5"/><circle cx="4" cy="6.500" r="2.5"/><circle cx="16" cy="6.500" r="2.5"/><circle cx="4" cy="13.500" r="2.5"/><circle cx="16" cy="13.500" r="2.5"/></g></svg></button>
    </div>
    <div class="flex items-center pr-3.5 text-[10px]">
      <svg class="w-[76px] h-4" viewBox="0 0 76 16" fill="none" stroke="#eee"><path d="M4 10l5-5 5 5" stroke-width="1.3"/><path d="M24 5h11v7H24z" fill="#eee"/><path d="M22 3v4M25 3v4M21 6h5v2h-4"/><path d="M42 13A11 11 0 0 1 53 3M45 13a8 8 0 0 1 8-7M48 13a5 5 0 0 1 5-4M51 13a3 3 0 0 1 2-1"/><path d="M60 6.500h2.500L66 4v9l-3.500-2.500H60zM68 6.500c1 1 1 3 0 4M70 5c2 2 2 5 0 7M72.500 4c2 3 2 6 0 9"/></svg>
      <span class="ml-2.5">ENG</span>
      <time class="ml-2 w-[48px] text-center leading-[15px] whitespace-nowrap">10:56 AM<br>17-Mar-17</time>
      <svg class="ml-4 w-5 h-6" viewBox="0 0 20 24"><path d="M1 4h14v11H8l-3 3v-3H1z" fill="#fff"/><path d="M3 7h10M3 9.500h10M3 12h6" stroke="#333"/><circle cx="13.500" cy="16.500" r="6" fill="#333" stroke="#999"/><text x="13.500" y="20" text-anchor="middle" class="text-[9px]" fill="#fff">4</text></svg>
    </div>
  </div>

  <script>
    const NS = 'http://www.w3.org/2000/svg';

    function add(parent, name, attrs, text) {
      const el = document.createElementNS(NS, name);
      for (const key in attrs) el.setAttribute(key, attrs[key]);
      if (text !== undefined) el.textContent = text;
      document.getElementById(parent).appendChild(el);
    }

    // Station ruler, one tick per 100 m
    const KM0 = 324.7;
    const KM = 190.4;
    for (let i = -1; i <= 41; i++) {
      const x = KM0 + i * KM / 10;
      const isKm = i >= 0 && i % 10 === 0;
      add('ruler', 'path', { d: `M${Math.round(x) + 0.5} ${isKm ? 120 : 131}V146`, stroke: '#111' });
      const label = i < 0 ? '-100' : ((i % 10) * 100 || '000');
      add('ruler', 'text', { transform: `translate(${x + 6.5} 143) rotate(-90)`, class: 'text-[5px] font-bold', fill: '#222' }, label);
      if (isKm) add('ruler', 'text', { x: x + 2, y: 129, class: 'text-[8px] font-bold', fill: '#333' }, `${i / 10}. km`);
    }

    const stations = [
      [333, '0 Start', '#111'], [655, '1,700 Intersection 1', '#111'], [732, '2,100 Crossing 2', '#0a1a60'],
      [846, '2,700 Culvert/ River', '#111'], [884, '2,900 Intersection 2', '#111'], [1093, '4,000 End', '#111'],
    ];
    stations.forEach(([x, name, fill]) => {
      add('ruler', 'text', { transform: `translate(${x} 209) rotate(-90)`, class: 'text-[6px] font-bold', fill }, name);
    });

    // Week rows
    for (let i = 0; i < 20; i++) {
      const y = 225 + i * 14.6;
      if (y < 497) add('weeks', 'path', { d: `M305 ${Math.round(y) + 0.5}H1124`, stroke: '#ccc' });
      add('weeks', 'path', { d: `M265 ${Math.round(y) + 0.5}H303`, stroke: '#111' });
      add('weeks', 'text', { x: 284, y: y - 5, 'text-anchor': 'middle', class: 'text-[6px] font-bold', fill: '#111' }, `${i === 0 ? -1 : i}. week`);
    }

    // Task line with small marks along it
    function task(points, step, color, mark) {
      add('tasks', 'path', { d: 'M' + points.map(p => p.join(' ')).join('L'), fill: 'none', stroke: color });
      let d = '';
      for (let i = 1; i < points.length; i++) {
        const [x1, y1] = points[i - 1];
        const [x2, y2] = points[i];
        const slope = (y2 - y1) / (x2 - x1);
        for (let x = x1 + 3; x < x2 - 4; x += step) {
          const y = y1 + (x - x1) * slope;
          if (mark === 'arc') d += `M${x} ${y}q2 -4 4 -2l1.500 2`;
          if (mark === 'dash') d += `M${x} ${y - 1}l2 -1.500h3.500`;
          if (mark === 'tick') d += `M${x} ${y - 1}l1 -2`;
        }
      }
      add('tasks', 'path', { d, fill: 'none', stroke: color, 'stroke-width': 0.8 });
    }
    task([[325, 311], [838, 240]], 9.5, '#a03848', 'dash');
    task([[839, 370], [1086, 334]], 9.5, '#a03848', 'dash');
    task([[325, 348], [362, 343], [410, 328], [438, 317], [482, 297], [535, 288], [600, 282], [648, 279]], 10, '#409890', 'tick');
    task([[648, 279], [829, 349]], 9.5, '#c04850', 'tick');
    task([[330, 379], [838, 456]], 10, '#cc2c34', 'arc');
    task([[325, 389], [773, 458]], 10, '#2c2cb8', 'arc');
    task([[775, 473], [838, 483]], 10, '#2c2cb8', 'arc');
    task([[905, 497], [1072, 473]], 10, '#c03038', 'arc');
    task([[990, 497], [1086, 483]], 10, '#2c2cb8', 'arc');
    add('tasks', 'path', { d: 'M773 458l-1 7 3 3v5', fill: 'none', stroke: '#1838c8', 'stroke-width': 1.5 });
    add('tasks', 'path', { d: 'M1072 473V458l5 -1', fill: 'none', stroke: '#b04030', 'stroke-width': 1.5 });

    // Resource columns: [label, [from, to, colour, amount]...]
    const G = '#a6a6a6', L = '#c8c8c8', Y = '#ffff00', YG = '#9acd32';
    const resources = [
      ['Assistant', [240, 356, G, 2], [356, 385, Y, 3], [385, 509, YG, 4]],
      ['Machine Operator', [240, 269, G, 2], [269, 356, '#2be600', 5], [356, 385, G, 2], [385, 444, Y, 3], [444, 509, YG, 4]],
      ['Specialist', [356, 509, L, 1]],
      ['Caterpillar', [240, 269, G, 2], [269, 356, YG, 4], [356, 385, G, 2]],
      ['Caterpillar', [356, 509, L, 1]],
      ['Excavator', [269, 385, L, 1], [385, 444, G, 2], [444, 509, Y, 3]],
      ['Steel roler', [269, 356, G, 2]],
      ['Truck', [269, 356, '#16a050', 6]],
      ['Labour'],
    ];
    resources.forEach(([name, ...blocks], i) => {
      const x = 1124.5 + i * 12.5;
      blocks.forEach(([y1, y2, fill, n]) => {
        add('resources', 'rect', { x: x + 0.5, y: y1, width: 11.5, height: y2 - y1, fill });
        // the last blocks run on below the visible area
        const mid = (y1 + (y2 === 509 ? 530 : y2)) / 2;
        add('resources', 'text', { x: x + 6, y: mid + 3, 'text-anchor': 'middle', class: 'text-[8px] font-bold', fill: '#333' }, n);
      });
      if (i > 0) add('resources', 'path', { d: `M${x} 120V509`, stroke: '#333' });
      add('resources', 'text', { transform: `translate(${x + 8} 208) rotate(-90)`, class: 'text-[8px]', fill: '#222' }, name);
    });
    ['2,500', '2,000', '1,500', '1,000'].forEach((t, i) => {
      add('resources', 'text', { transform: `translate(${1244 + i * 9} 208) rotate(-90)`, class: 'text-[8px]', fill: '#222' }, t);
    });
  </script>
</body>
</html>
